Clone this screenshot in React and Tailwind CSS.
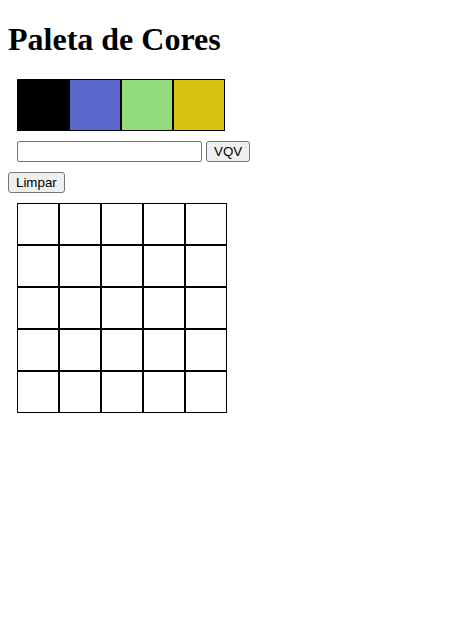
import React from "react";

const colors = ["bg-[#000000]", "bg-[#5b68cd]", "bg-[#93dc7c]", "bg-[#d9c312]"];

export default function App() {
  const cells = Array.from({ length: 25 });

  return (
    <div className="p-2 bg-white min-h-[643px] text-black font-['Liberation_Serif',serif]">
      <h1 className="text-[32px] font-bold leading-[37px] mt-[13px] mb-[21px]">Paleta de Cores</h1>

      <div className="flex ml-[9px]">
        {colors.map((c, i) => (
          <div key={i} className={`w-[52px] h-[52px] border border-black ${c}`} />
        ))}
      </div>

      <div className="flex items-center gap-1 ml-[9px] mt-[10px] font-['Liberation_Sans',sans-serif] text-[13.33px]">
        <input
          type="text"
          className="w-[185px] h-[21px] border border-[#767676] rounded-[2px] px-[2px] bg-white outline-none"
        />
        <button className="h-[21px] px-[7px] border border-[#767676] rounded-[3px] bg-[#efefef] leading-none">
          VQV
        </button>
      </div>

      <button className="mt-[10px] h-[21px] px-[7px] border border-[#767676] rounded-[3px] bg-[#efefef] font-['Liberation_Sans',sans-serif] text-[13.33px] leading-none">
        Limpar
      </button>

      <div className="grid grid-cols-[repeat(5,42px)] w-fit ml-[9px] mt-[9px]">
        {cells.map((_, i) => (
          <div key={i} className="w-[42px] h-[42px] border border-black bg-white" />
        ))}
      </div>
    </div>
  );
}
